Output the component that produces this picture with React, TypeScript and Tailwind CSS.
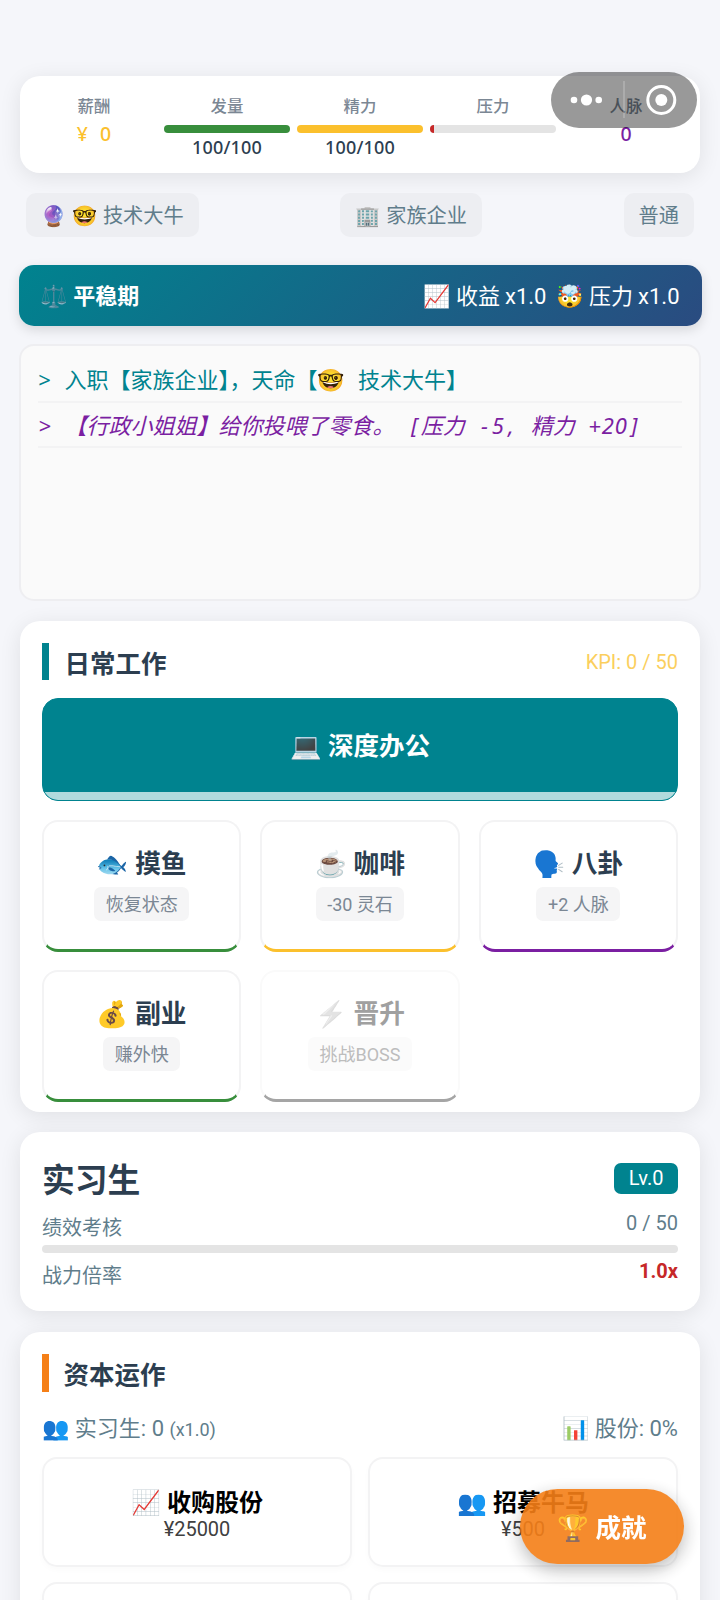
import type { ReactNode } from "react";

function Stat({ label, children }: { label: string; children?: ReactNode }) {
  return (
    <div className="flex flex-col items-center">
      <div className="h-6 text-[16.4px] font-medium leading-[26px] text-[#7b8794]">{label}</div>
      {children}
    </div>
  );
}

function Meter({ fill, value }: { fill: string; value?: string }) {
  return (
    <>
      <div className="mt-[7px] h-[8px] w-full overflow-hidden rounded-full bg-[#e4e4e4]">
        <div className={`h-full ${fill}`} />
      </div>
      <div className="mt-[2px] h-6 font-['Noto_Sans'] text-[18px] font-medium leading-6 tracking-[0.2px] text-[#2c3e50]">{value}</div>
    </>
  );
}

function Chip({ children }: { children: ReactNode }) {
  return (
    <div className="flex h-[44px] items-center whitespace-pre rounded-[10px] bg-[#edeef2] px-[15px] pt-[2px] text-[20.2px] leading-[30px] text-[#607d8b] [word-spacing:0.8px]">
      {children}
    </div>
  );
}

/* Fixed-pitch run: every character sits in a cell 0.6em wide. */
function Mono({ children }: { children: string }) {
  return (
    <span className="font-['Noto_Sans']">
      {Array.from(children).map((c, i) => (
        <span key={i} className="inline-block w-[0.6em] whitespace-pre text-center">{c}</span>
      ))}
    </span>
  );
}

const cardShadow = "shadow-[0_4px_22px_rgba(0,0,0,0.09)]";

function Action({ icon, name, note, edge, muted }: { icon: string; name: string; note: string; edge: string; muted?: boolean }) {
  return (
    <div
      className={`flex h-[132px] flex-col items-center rounded-[16px] border-2 border-b-[3px] pt-[22px] ${edge} ${
        muted ? "border-x-[#fafafa] border-t-[#fafafa]" : "border-x-[#f3f3f4] border-t-[#f3f3f4]"
      }`}
    >
      <div className={`h-[38px] whitespace-pre text-[25.7px] font-bold leading-[41px] ${muted ? "text-[#a0a0a0]" : "text-[#2c3e50]"}`}>
        <span className={muted ? "opacity-50 grayscale" : ""}>{icon}</span> {name}
      </div>
      <div className={`mt-[5px] h-[34px] rounded-[7px] px-[11.5px] text-[18px] leading-[36px] ${muted ? "bg-[#fbfbfb] text-[#bdbdbd]" : "bg-[#f5f5f6] text-[#7b8794]"}`}>
        {note}
      </div>
    </div>
  );
}

function Deal({ icon, name, price }: { icon: string; name: string; price: string }) {
  return (
    <div className="flex h-[110px] flex-col items-center rounded-[15px] border-2 border-[#f3f3f4] pt-[26px] shadow-[0_3px_6px_rgba(0,0,0,0.02)]">
      <div className="h-[34px] whitespace-pre text-[24px] font-bold leading-[36px] text-black">{icon} {name}</div>
      <div className="h-[24px] text-[20px] leading-[20px] text-[#404040]">{price}</div>
    </div>
  );
}

export default function App() {
  return (
    <div className="relative h-[1600px] w-[720px] overflow-hidden bg-[#f5f6fa] pt-[76px] font-[Roboto,'Noto_Sans_CJK_SC','Noto_Color_Emoji',sans-serif]">
      <header className={`mx-5 grid h-[97px] grid-cols-5 gap-[7px] rounded-[20px] bg-white px-[11px] pt-[18px] ${cardShadow}`}>
        <Stat label="薪酬">
          <div className="mt-[3px] h-[24px] whitespace-pre font-['Noto_Sans'] text-[19.5px] font-medium leading-[25px] text-[#fbc02d] [word-spacing:7px]">¥ 0</div>
        </Stat>
        <Stat label="发量"><Meter fill="w-full bg-[#388e3c]" value="100/100" /></Stat>
        <Stat label="精力"><Meter fill="w-full bg-[#fbc02d]" value="100/100" /></Stat>
        <Stat label="压力"><Meter fill="w-[4px] bg-[#c62828]" /></Stat>
        <Stat label="人脉">
          <div className="mt-[3px] h-[24px] font-['Noto_Sans'] text-[19.5px] font-medium leading-[25px] text-[#7b1fa2]">0</div>
        </Stat>
      </header>

      <div className="mt-[20px] flex justify-between px-[26px]">
        <Chip>🔮 🤓 技术大牛</Chip>
        <Chip>🏢 家族企业</Chip>
        <Chip>普通</Chip>
      </div>

      <div className="mx-[18.5px] mt-[28px] flex h-[61px] items-center justify-between whitespace-pre rounded-[15px] bg-[linear-gradient(135deg,#00838f,#2a4b80)] px-[22px] pt-[2px] text-[22px] text-white shadow-[0_4px_12px_rgba(0,0,0,0.13)]">
        <div className="font-bold"><span className="font-normal">⚖️</span> 平稳期</div>
        <div className="[word-spacing:-0.4px]">📈 收益 x1.0  🤯 压力 x1.0</div>
      </div>

      <section className="mx-[19px] mt-[18px] h-[257px] rounded-[15px] border-2 border-[#eeeef1] bg-[#fafafa] px-[17px] pt-[11px] text-[22px]">
        <div className="h-[46px] whitespace-pre border-b-2 border-[#f3f3f4] leading-[44px] text-[#00838f]">
          <Mono>{"> "}</Mono>入职【家族企业】，天命【🤓<Mono> </Mono>技术大牛】
        </div>
        <div className="h-[45px] whitespace-pre border-b-2 border-[#f3f3f4] italic leading-[45px] text-[#7b1fa2]">
          <Mono>{"> "}</Mono>【行政小姐姐】给你投喂了零食。<Mono>{" ["}</Mono>压力<Mono>{" -5, "}</Mono>精力<Mono>{" +20]"}</Mono>
        </div>
      </section>

      <section className={`mx-5 mt-[20px] h-[491px] rounded-[20px] bg-white px-[22px] pt-[22px] ${cardShadow}`}>
        <div className="flex h-[37px] items-center justify-between">
          <h2 className="h-[37px] border-l-[7px] border-[#00838f] pl-[15.5px] text-[25.5px] font-bold leading-[43px] text-[#2c3e50]">日常工作</h2>
          <div className="text-[20px] text-[#fbcf5e]">KPI: 0 / 50</div>
        </div>
        <div className="mt-[18px] flex h-[103px] flex-col overflow-hidden rounded-[16px] border-[1.5px] border-[#00838f] bg-[#00838f]">
          <div className="flex h-[93px] shrink-0 items-center justify-center whitespace-pre pt-[2px] text-[25.5px] font-bold text-white">💻 深度办公</div>
          <div className="flex-1 bg-[#b0dadd]" />
        </div>
        <div className="mt-[19px] grid grid-cols-3 gap-x-[19px] gap-y-[18px]">
          <Action icon="🐟" name="摸鱼" note="恢复状态" edge="border-b-[#388e3c]" />
          <Action icon="☕" name="咖啡" note="-30 灵石" edge="border-b-[#fbc02d]" />
          <Action icon="🗣️" name="八卦" note="+2 人脉" edge="border-b-[#7b1fa2]" />
          <Action icon="💰" name="副业" note="赚外快" edge="border-b-[#388e3c]" />
          <Action icon="⚡" name="晋升" note="挑战BOSS" edge="border-b-[#a5a5a5]" muted />
        </div>
      </section>

      <section className={`mx-5 mt-[20px] h-[179px] rounded-[20px] bg-white px-[22px] pt-[28px] text-[20px] text-[#607d8b] ${cardShadow}`}>
        <div className="flex h-[40px] items-center justify-between">
          <h1 className="h-[40px] text-[32.8px] font-bold leading-[42px] text-[#2c3e50]">实习生</h1>
          <div className="mb-[3px] h-[31px] rounded-[7px] bg-[#00838f] px-[14.5px] leading-[31px] text-white">Lv.0</div>
        </div>
        <div className="mt-[10px] flex h-[30px] justify-between">
          <span className="leading-[37px]">绩效考核</span><span className="leading-[26px]">0 / 50</span>
        </div>
        <div className="mt-[5px] h-[8px] rounded-full bg-[#e4e4e4]" />
        <div className="mt-[5px] flex h-[30px] justify-between">
          <span className="leading-[36px]">战力倍率</span><span className="font-bold leading-[26px] text-[#c62828]">1.0x</span>
        </div>
      </section>

      <section className={`mx-5 mt-[21px] h-[430px] rounded-[20px] bg-white px-[22px] pt-[22px] ${cardShadow}`}>
        <h2 className="h-[38px] border-l-[7px] border-[#f57f17] pl-[14.5px] text-[25.5px] font-bold leading-[43px] text-[#2c3e50]">资本运作</h2>
        <div className="mt-[18px] flex h-[36px] items-center justify-between whitespace-pre text-[22px] text-[#607d8b]">
          <div>👥 实习生: 0 <span className="text-[18px]">(x1.0)</span></div>
          <div>📊 股份: 0%</div>
        </div>
        <div className="mt-[11px] grid grid-cols-2 gap-x-[16px] gap-y-[15px]">
          <Deal icon="📈" name="收购股份" price="¥25000" />
          <Deal icon="👥" name="招募牛马" price="¥500" />
          <Deal icon="" name="" price="" />
          <Deal icon="" name="" price="" />
        </div>
      </section>

      <button className="absolute left-[520px] top-[1489px] flex h-[75px] w-[164px] items-center justify-center whitespace-pre rounded-full bg-[#f57f17] pt-[3px] text-[25.5px] font-bold text-white opacity-90 shadow-[0_6px_18px_rgba(0,0,0,0.3)]">🏆 成就</button>

      <svg className="absolute left-[550px] top-[71px]" width="148" height="58" viewBox="0 0 148 58">
        <rect x="1" y="1" width="146" height="56" rx="28" fill="#000" fillOpacity="0.4" />
        <g fill="#fff">
          <circle cx="24" cy="29" r="3.3" />
          <circle cx="36.5" cy="29" r="5.6" />
          <circle cx="48.7" cy="29" r="3.3" />
          <circle cx="111.3" cy="29" r="6" />
        </g>
        <circle cx="111.3" cy="29" r="13.5" fill="none" stroke="#fff" strokeWidth="3" />
        <path d="M74 10V47" stroke="#fff" strokeOpacity="0.25" strokeWidth="1.5" />
      </svg>
    </div>
  );
}
